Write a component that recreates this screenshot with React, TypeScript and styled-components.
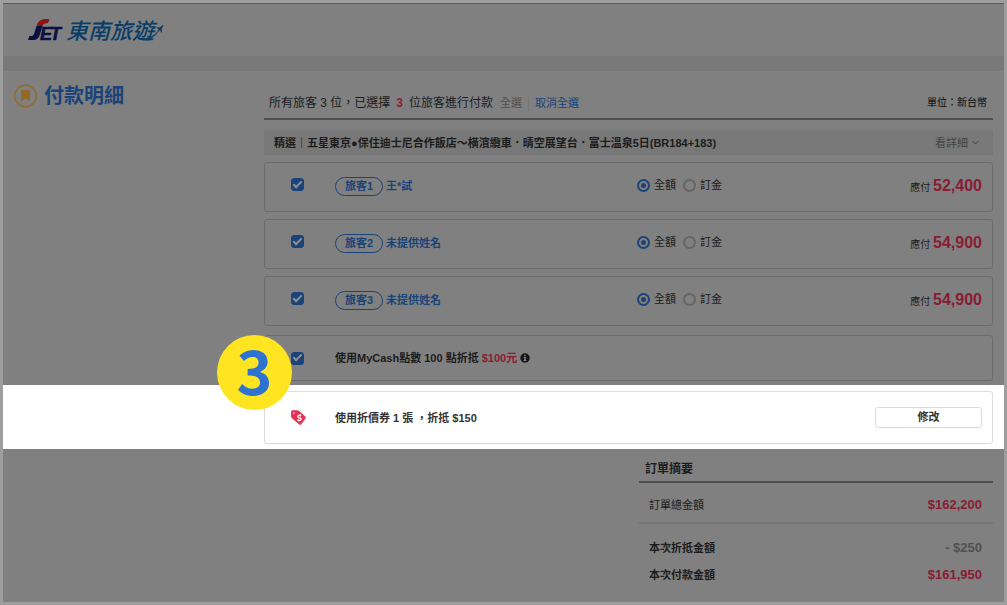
import React from 'react';
import styled, { createGlobalStyle } from 'styled-components';

const color = {
  page: '#808080',
  frame: '#9e9e9e',
  ink: '#1c1c1c',
  blue: '#194379',
  red: '#8a1b33',
  line: '#6c6c6c',
  muted: '#505050',
};

const GlobalStyle = createGlobalStyle`
  *, *::before, *::after { box-sizing: border-box; }
  body {
    margin: 0;
    background: ${color.frame};
    color: ${color.ink};
    font-family: 'Liberation Sans', 'Noto Sans CJK TC', sans-serif;
    font-size: 11px;
    line-height: 16px;
  }
  h1, h2, h3, p, dl, dd, ul { margin: 0; padding: 0; }
  button, input { font: inherit; margin: 0; }
`;

const Frame = styled.div`
  display: flex;
  flex-direction: column;
  min-height: 100vh;
  border: 3px solid ${color.frame};
  background: ${color.page};
`;

const Header = styled.header`
  display: flex;
  align-items: center;
  height: 53px;
  padding-left: 22px;
  border-top: 1px solid #4c6072;
`;

const LogoLink = styled.a`
  display: block;
  height: 32px;
`;

const Strip = styled.div`
  height: 15px;
  background: #797979;
`;

const Columns = styled.div`
  display: flex;
  padding-right: 11px;
`;

const Aside = styled.aside`
  flex: 0 0 261px;
  display: flex;
  align-items: center;
  align-self: flex-start;
  gap: 7px;
  padding: 11px 0 0 11px;
`;

const PageTitle = styled.h1`
  color: ${color.blue};
  font-size: 20px;
  line-height: 28px;
`;

const Content = styled.main`
  flex: 1;
  min-width: 0;
`;

const SelectionBar = styled.div`
  display: flex;
  align-items: center;
  height: 49px;
  padding: 16px 6px 0 5px;
  border-bottom: 2px solid #4e4e4e;
`;

const SelectionText = styled.p`
  font-size: 12px;
  white-space: pre;
`;

const Count = styled.strong`
  margin: 0 6px;
  color: ${color.red};
`;

const TextButton = styled.button<{ $active?: boolean }>`
  padding: 0 6px;
  border: 0;
  border-left: 1px solid ${(p) => (p.$active ? '#767676' : 'transparent')};
  background: none;
  color: ${(p) => (p.$active ? color.blue : color.muted)};
  cursor: pointer;
`;

const Unit = styled.span`
  margin-left: auto;
  font-size: 10px;
  font-weight: 500;
`;

const TourBar = styled.div`
  display: flex;
  align-items: center;
  justify-content: space-between;
  height: 25px;
  margin: 10px 0 7px;
  padding: 0 14px 0 10px;
  background: #787878;
`;

const TourName = styled.h2`
  font-size: 11px;
  font-weight: 700;
`;

const DetailButton = styled.button`
  display: flex;
  align-items: center;
  gap: 4px;
  padding: 0;
  border: 0;
  background: none;
  color: #444;
  cursor: pointer;
`;

const Travellers = styled.ul`
  display: grid;
  gap: 7px;
  list-style: none;
`;

const Card = styled.div<{ $height: number; $bright?: boolean }>`
  display: grid;
  grid-template-columns: 44px 7fr 8fr;
  align-items: center;
  min-height: ${(p) => p.$height}px;
  padding: 0 10px 0 26px;
  border: 1px solid ${(p) => (p.$bright ? '#dcdcdc' : color.line)};
  border-radius: 3px;
`;

const TravellerCard = styled(Card)`
  padding-bottom: 2px;
`;

const Checkbox = styled.input.attrs({ type: 'checkbox' })`
  appearance: none;
  display: grid;
  place-items: center;
  width: 13px;
  height: 13px;
  border: 1px solid ${color.blue};
  border-radius: 3px;

  ${TravellerCard} & { margin-bottom: 3px; }

  &:checked { background: ${color.blue}; }
  &:checked::after {
    content: '';
    width: 9px;
    height: 5px;
    margin-bottom: 3px;
    border: solid #8f8f8f;
    border-width: 0 0 2px 2px;
    transform: rotate(-45deg);
  }
`;

const NameLabel = styled.label`
  display: flex;
  align-items: center;
  gap: 3px;
  color: ${color.blue};
  font-weight: 700;
`;

const Pill = styled.span`
  width: 48px;
  height: 19px;
  border: 1px solid ${color.blue};
  border-radius: 10px;
  line-height: 17px;
  text-align: center;
`;

const PaymentCell = styled.div`
  display: flex;
  align-items: center;
  justify-content: space-between;
`;

const Choices = styled.div`
  display: flex;
  gap: 7px;
  padding-bottom: 2px;
`;

const Choice = styled.label`
  display: flex;
  align-items: center;
  gap: 4px;
`;

const Radio = styled.input.attrs({ type: 'radio' })`
  appearance: none;
  display: grid;
  place-items: center;
  width: 13px;
  height: 13px;
  border: 2px solid #656565;
  border-radius: 50%;

  &:checked { border-color: ${color.blue}; }
  &:checked::after {
    content: '';
    width: 5px;
    height: 5px;
    border-radius: 50%;
    background: ${color.blue};
  }
`;

const Due = styled.p`
  padding-top: 2px;
  font-size: 10px;
  line-height: 20px;
`;

const Amount = styled.strong`
  color: ${color.red};
  font-size: 16px;
`;

const PointsBlock = styled.div`
  margin: 9px 0 4px;
`;

const OfferText = styled.label`
  display: flex;
  align-items: center;
  grid-column: 2 / 4;
  gap: 3px;
  font-weight: 700;
`;

const Discount = styled.span`
  color: ${color.red};
`;

const CouponBand = styled.section`
  position: relative;
  padding: 6px 11px 5px 261px;
  background: #fff;
`;

const StepBadge = styled.span`
  position: absolute;
  top: -50px;
  left: 214px;
  width: 75px;
  height: 75px;
  border-radius: 50%;
  background: #ffe422;
  color: #2d73d2;
  font-family: 'Noto Sans CJK TC', sans-serif;
  font-size: 61px;
  font-weight: 700;
  line-height: 68px;
  text-align: center;
`;

const CouponCell = styled.div`
  display: flex;
  align-items: center;
  justify-content: space-between;
  grid-column: 2 / 4;
  color: #333;
  font-weight: 700;
`;

const EditButton = styled.button`
  width: 107px;
  height: 21px;
  padding: 0;
  border: 1px solid #dcdcdc;
  border-radius: 3px;
  background: #fff;
  color: #333;
  font-weight: 700;
  line-height: 19px;
  cursor: pointer;
`;

const Summary = styled.section`
  width: 354px;
  max-width: 100%;
  margin: 0 11px 0 auto;
`;

const SummaryTitle = styled.h3`
  height: 34px;
  padding: 11px 6px 0;
  border-bottom: 2px solid #4e4e4e;
  font-size: 12px;
  line-height: 18px;
`;

const SummaryTotal = styled.dl`
  padding: 8px 0 4px;
  border-bottom: 2px solid #757575;
`;

const SummaryPayment = styled.dl`
  padding: 10px 0;
`;

const SummaryRow = styled.div<{ $strong?: boolean }>`
  display: flex;
  align-items: center;
  justify-content: space-between;
  height: 27px;
  padding: 0 11px 0 10px;
  font-weight: ${(p) => (p.$strong ? 700 : 400)};
`;

const Sum = styled.dd<{ $muted?: boolean }>`
  color: ${(p) => (p.$muted ? color.muted : color.red)};
  font-size: 13px;
  font-weight: 700;
`;

const LogoDrawing = styled.svg`
  display: block;
  overflow: visible;
`;

const LogoName = styled.text`
  font-family: 'Noto Sans CJK TC', sans-serif;
  font-size: 22px;
  font-style: italic;
  font-weight: 500;
`;

const Logo = () => (
  <LogoDrawing width="144" height="32" viewBox="0 0 144 32" role="img" aria-label="JET 東南旅遊">
    <g fontFamily="'Liberation Sans', sans-serif" fontWeight="700" fontStyle="italic" fill="#0b1040" stroke="#0b1040" strokeWidth="0.600">
      <text x="15" y="26" fontSize="18">E</text>
      <text x="25" y="26" fontSize="18">T</text>
    </g>
    <path d="M11.500 12H17.500L15 20Q13.500 26 8.500 26H3L4.500 22H6.500Q8.500 22 9 20Z" fill="#0b1040" />
    <path d="M11.500 12Q13.500 5 20 5H24.500L23 9Q18.500 9 17.500 12Z" fill="#8c1218" />
    <LogoName x="41" y="25" fill="#063e69">東南旅遊</LogoName>
    <path d="M116 25Q127 28 134.500 15.500Q128 25 116 25Z" fill="#063e69" stroke="#063e69" strokeWidth="0.600" />
    <path d="M138.500 11L136.800 11.700L135.200 13.500L132 13.200L131.600 13.900L134 15L132.500 16.700L133.500 17L135 16L136.200 18.800L136.900 18.200L136.600 15L138 12.800Z" fill="#08345c" />
  </LogoDrawing>
);

const BookmarkIcon = () => (
  <svg width="23" height="24" viewBox="0 0 23 24" aria-hidden="true">
    <circle cx="11.500" cy="12" r="10.750" fill="none" stroke="#936923" strokeWidth="1.300" />
    <path d="M8 6H15Q16 6 16 7V17.500L11.500 14.500L7 17.500V7Q7 6 8 6Z" fill="#936923" />
  </svg>
);

const ChevronIcon = () => (
  <svg width="7" height="5" viewBox="0 0 7 5" aria-hidden="true">
    <path d="M0.500 1L3.500 4L6.500 1" fill="none" stroke="#444" strokeWidth="1" />
  </svg>
);

const InfoIcon = () => (
  <svg width="10" height="10" viewBox="0 0 10 10" aria-hidden="true">
    <circle cx="5" cy="5" r="4.700" fill="#141414" />
    <path d="M4.200 1.800H5.800V3.200H4.200ZM3.600 4H5.800V7H6.400V8H3.600V7H4.200V5H3.600Z" fill="#858585" />
  </svg>
);

const CouponIcon = () => (
  <svg width="15" height="15" viewBox="0 0 15 15" aria-hidden="true">
    <path
      fillRule="evenodd"
      d="M1.500 0.300L6.500 0.300Q7.500 0.400 8.300 1L14.200 6.500Q15.200 7.600 14.400 8.700L10.200 14.200Q9.300 15.200 8.200 14.400L0.900 8.200Q0.200 7.500 0.100 6.500L0 1.800Q0.100 0.400 1.500 0.300ZM2.900 2.300A0.800 0.800 0 1 0 2.900 3.900A0.800 0.800 0 1 0 2.900 2.300Z"
      fill="#e83255"
    />
    <path
      d="M10 6Q8.500 4.600 7.300 5.700Q6.500 6.900 7.700 7.500L9.200 8Q10.600 8.800 9.500 10Q8.200 11.100 6.600 9.600M9.300 5.200L9.800 4.500M6.700 11L7.300 10.300"
      fill="none"
      stroke="#fff"
      strokeWidth="1.400"
    />
  </svg>
);

const travellers = [
  { id: 1, name: '王*試', due: '52,400' },
  { id: 2, name: '未提供姓名', due: '54,900' },
  { id: 3, name: '未提供姓名', due: '54,900' },
];

export default function App() {
  return (
    <>
      <GlobalStyle />
      <Frame>
        <Header>
          <LogoLink href="#">
            <Logo />
          </LogoLink>
        </Header>
        <Strip />
        <Columns>
          <Aside>
            <BookmarkIcon />
            <PageTitle>付款明細</PageTitle>
          </Aside>
          <Content>
            <SelectionBar>
              <SelectionText>
                所有旅客 3 位，已選擇<Count>3</Count>位旅客進行付款
              </SelectionText>
              <TextButton type="button">全選</TextButton>
              <TextButton type="button" $active>取消全選</TextButton>
              <Unit>單位：新台幣</Unit>
            </SelectionBar>
            <TourBar>
              <TourName>精選｜五星東京●保住迪士尼合作飯店～橫濱纜車．晴空展望台．富士溫泉5日(BR184+183)</TourName>
              <DetailButton type="button">
                看詳細
                <ChevronIcon />
              </DetailButton>
            </TourBar>
            <Travellers>
              {travellers.map((t) => (
                <TravellerCard as="li" $height={50} key={t.id}>
                  <Checkbox id={`traveller-${t.id}`} defaultChecked />
                  <NameLabel htmlFor={`traveller-${t.id}`}>
                    <Pill>旅客{t.id}</Pill>
                    {t.name}
                  </NameLabel>
                  <PaymentCell>
                    <Choices>
                      <Choice>
                        <Radio name={`payment-${t.id}`} defaultChecked />
                        全額
                      </Choice>
                      <Choice>
                        <Radio name={`payment-${t.id}`} />
                        訂金
                      </Choice>
                    </Choices>
                    <Due>
                      應付 <Amount>{t.due}</Amount>
                    </Due>
                  </PaymentCell>
                </TravellerCard>
              ))}
            </Travellers>
            <PointsBlock>
              <Card $height={46}>
                <Checkbox id="points" defaultChecked />
                <OfferText htmlFor="points">
                  使用MyCash點數 100 點折抵 <Discount>$100元</Discount>
                  <InfoIcon />
                </OfferText>
              </Card>
            </PointsBlock>
          </Content>
        </Columns>
        <CouponBand>
          <Card $height={53} $bright>
            <CouponIcon />
            <CouponCell>
              <p>使用折價券 1 張 ，折抵 $150</p>
              <EditButton type="button">修改</EditButton>
            </CouponCell>
          </Card>
          <StepBadge>3</StepBadge>
        </CouponBand>
        <Summary>
          <SummaryTitle>訂單摘要</SummaryTitle>
          <SummaryTotal>
            <SummaryRow>
              <dt>訂單總金額</dt>
              <Sum>$162,200</Sum>
            </SummaryRow>
          </SummaryTotal>
          <SummaryPayment>
            <SummaryRow $strong>
              <dt>本次折抵金額</dt>
              <Sum $muted>- $250</Sum>
            </SummaryRow>
            <SummaryRow $strong>
              <dt>本次付款金額</dt>
              <Sum>$161,950</Sum>
            </SummaryRow>
          </SummaryPayment>
        </Summary>
      </Frame>
    </>
  );
}
